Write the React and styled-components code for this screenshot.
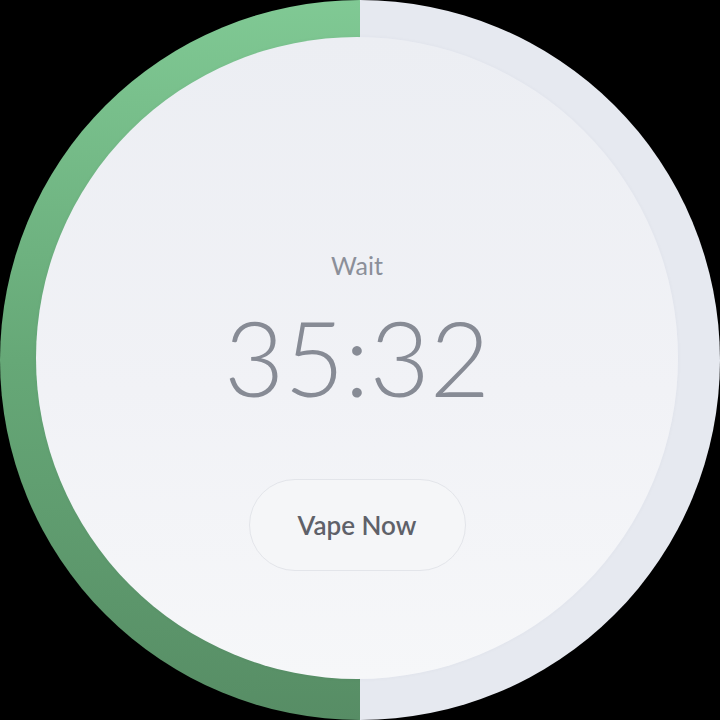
import React from "react";
import styled, { createGlobalStyle } from "styled-components";

const GlobalStyle = createGlobalStyle`
  html, body {
    margin: 0;
    padding: 0;
    background: #000000;
  }
  #root {
    width: 720px;
    height: 720px;
  }
`;

const Ring = styled.div`
  width: 720px;
  height: 720px;
  border-radius: 50%;
  display: flex;
  align-items: center;
  justify-content: center;
  background:
    linear-gradient(to right, transparent 50%, #e6e9f0 50%),
    linear-gradient(to bottom, #80c994 0%, #66a877 50%, #578d65 100%);
`;

const Face = styled.div`
  width: 642px;
  height: 642px;
  margin: 0 6px 4px 0;
  border-radius: 50%;
  background: linear-gradient(to bottom, #eceef3 0%, #f1f2f6 55%, #f6f7f9 100%);
  box-shadow: 0 0 4px rgba(40, 50, 70, 0.04);
  display: flex;
  flex-direction: column;
  align-items: center;
  font-family: "Lato", "Inter", sans-serif;
`;

const Label = styled.div`
  margin-top: 213px;
  font-size: 25px;
  font-weight: 400;
  color: #8b8f99;
  line-height: 30px;
`;

const Time = styled.div`
  margin-top: 24px;
  font-size: 104px;
  font-weight: 300;
  color: #878b95;
  line-height: 106px;
  letter-spacing: 0;
`;

const Button = styled.button`
  margin-top: 69px;
  width: 217px;
  height: 92px;
  border-radius: 46px;
  border: 1.5px solid #e3e5ea;
  background: #f5f6f8;
  font-family: "Lato", "Inter", sans-serif;
  font-size: 26px;
  font-weight: 600;
  color: #5f6169;
  cursor: pointer;
`;

export default function App() {
  return (
    <>
      <GlobalStyle />
      <Ring>
        <Face>
          <Label>Wait</Label>
          <Time>35:32</Time>
          <Button>Vape Now</Button>
        </Face>
      </Ring>
    </>
  );
}
